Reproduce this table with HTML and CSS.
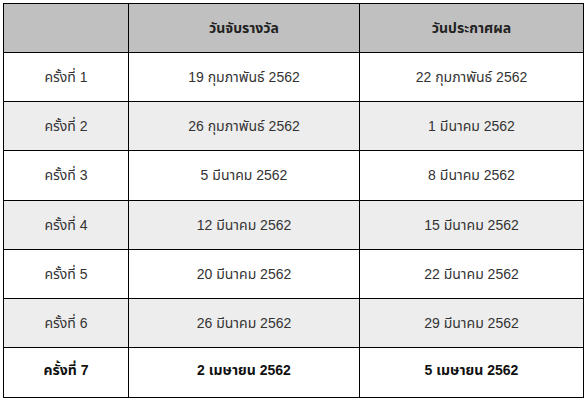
FILE: index.html
```html
<!DOCTYPE html>
<html lang="th">
<head>
<meta charset="utf-8">
<link rel="stylesheet" href="styles.css">
</head>
<body>
<table class="draw">
  <colgroup>
    <col class="c1"><col class="c2"><col class="c3">
  </colgroup>
  <thead>
    <tr class="head"><th></th><th>วันจับรางวัล</th><th>วันประกาศผล</th></tr>
  </thead>
  <tbody>
    <tr><td>ครั้งที่ 1</td><td>19 กุมภาพันธ์ 2562</td><td>22 กุมภาพันธ์ 2562</td></tr>
    <tr class="alt"><td>ครั้งที่ 2</td><td>26 กุมภาพันธ์ 2562</td><td>1 มีนาคม 2562</td></tr>
    <tr><td>ครั้งที่ 3</td><td>5 มีนาคม 2562</td><td>8 มีนาคม 2562</td></tr>
    <tr class="alt"><td>ครั้งที่ 4</td><td>12 มีนาคม 2562</td><td>15 มีนาคม 2562</td></tr>
    <tr><td>ครั้งที่ 5</td><td>20 มีนาคม 2562</td><td>22 มีนาคม 2562</td></tr>
    <tr class="alt"><td>ครั้งที่ 6</td><td>26 มีนาคม 2562</td><td>29 มีนาคม 2562</td></tr>
    <tr class="last"><td>ครั้งที่ 7</td><td>2 เมษายน 2562</td><td>5 เมษายน 2562</td></tr>
  </tbody>
</table>
</body>
</html>
```
FILE: styles.css
```css
html, body {
  margin: 0;
  padding: 0;
  background: #ffffff;
}
body {
  padding: 3px 0 0 3px;
  font-family: Tahoma, "Liberation Sans", "Noto Sans Thai", "Noto Sans", sans-serif;
  font-size: 14px;
  color: #333333;
}
.draw {
  border-collapse: collapse;
  table-layout: fixed;
  width: 580px;
}
.c1 { width: 125px; }
.c2 { width: 231px; }
.c3 { width: 224px; }
.draw th, .draw td {
  border: 1px solid #000000;
  text-align: center;
  vertical-align: middle;
  padding: 0;
  line-height: 20px;
}
.head th {
  background: #c0c0c0;
  height: 47px;
  font-weight: bold;
  color: #222222;
  padding-bottom: 1px;
}
.draw td {
  height: 48.2px;
}
.alt td {
  background: #ededed;
}
.last td {
  height: 43px;
  font-weight: bold;
  color: #111111;
  padding-bottom: 6px;
}
```
